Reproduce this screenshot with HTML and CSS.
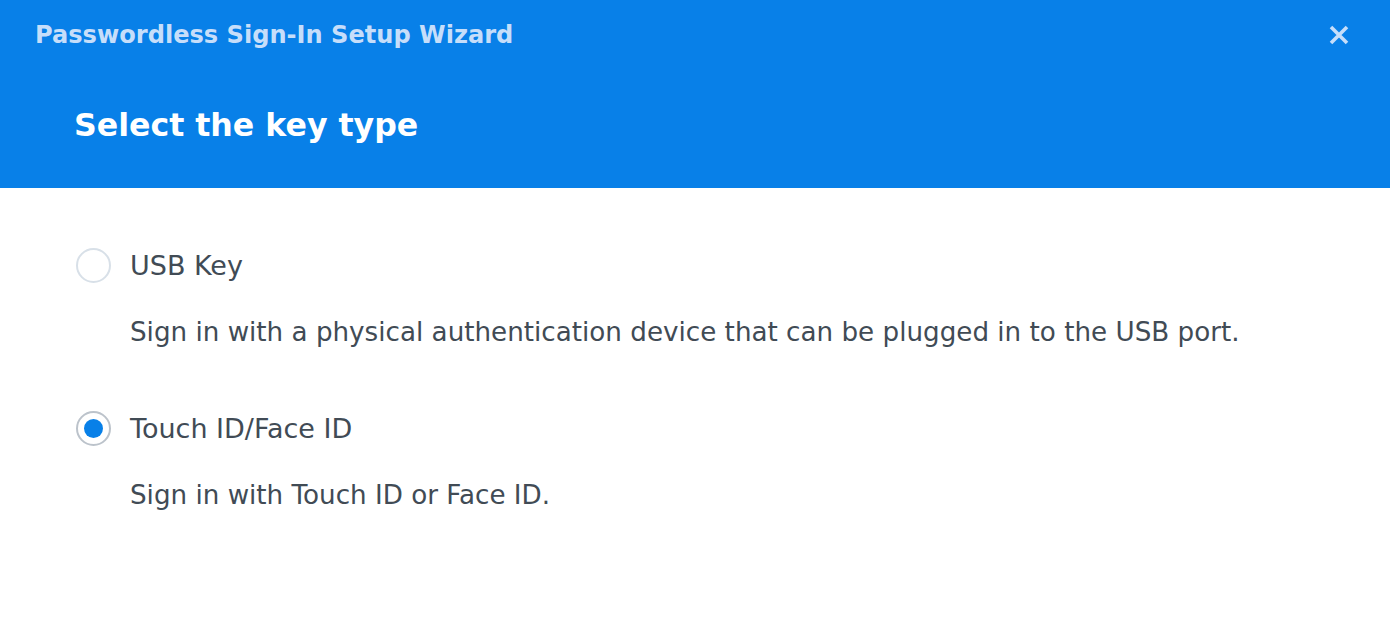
FILE: index.html
```html
<!DOCTYPE html>
<html>
<head>
    <link rel="stylesheet" href="styles.css">
</head>
<body>
<div class="wizard">
  <div class="header">
    <div class="topbar">
      <span class="title">Passwordless Sign-In Setup Wizard</span>
      <span class="close">
        <svg width="22" height="22" viewBox="0 0 22 22"><path d="M3 3L19 19M19 3L3 19" stroke="#c6defa" stroke-width="3.6" stroke-linecap="butt"/></svg>
      </span>
    </div>
    <h1 class="step">Select the key type</h1>
  </div>

  <div class="options">
    <div class="option">
      <label class="choice"><span class="radio"></span><span>USB Key</span></label>
      <p class="desc">Sign in with a physical authentication device that can be plugged in to the USB port.</p>
    </div>
    <div class="option">
      <label class="choice"><span class="radio checked"></span><span>Touch ID/Face ID</span></label>
      <p class="desc">Sign in with Touch ID or Face ID.</p>
    </div>
  </div>
</div>
</body>
</html>
```
FILE: styles.css
```css
*{
  margin: 0;
  padding: 0;
  box-sizing: border-box;
}
body{
  font-family: "DejaVu Sans", Verdana, sans-serif;
  background: #fff;
  color: #414b55;
}
.header{
  background: #0880e8;
  height: 188px;
  padding: 0 40px 0 35px;
}
.topbar{
  display: flex;
  justify-content: space-between;
  align-items: center;
  height: 70px;
}
.title{
  font-weight: bold;
  font-size: 24.1px;
  color: #c6defa;
}
.close{
  display: flex;
}
.step{
  font-size: 31.6px;
  line-height: 40px;
  font-weight: bold;
  color: #fff;
  padding-left: 39px;
  margin-top: 35px;
}
.options{
  padding: 59px 0 0 76px;
}
.option{
  margin-bottom: 63px;
}
.choice{
  display: flex;
  align-items: center;
  gap: 19px;
  font-size: 27px;
  height: 36px;
}
.radio{
  width: 35px;
  height: 35px;
  border-radius: 50%;
  border: 2px solid #d8e0e8;
  display: flex;
  justify-content: center;
  align-items: center;
}
.radio.checked{
  border-color: #bcc3cb;
}
.radio.checked::after{
  content: "";
  width: 19px;
  height: 19px;
  border-radius: 50%;
  background: #0880e8;
}
.desc{
  font-size: 26.2px;
  line-height: 30px;
  margin: 34px 0 0 54px;
}
```
